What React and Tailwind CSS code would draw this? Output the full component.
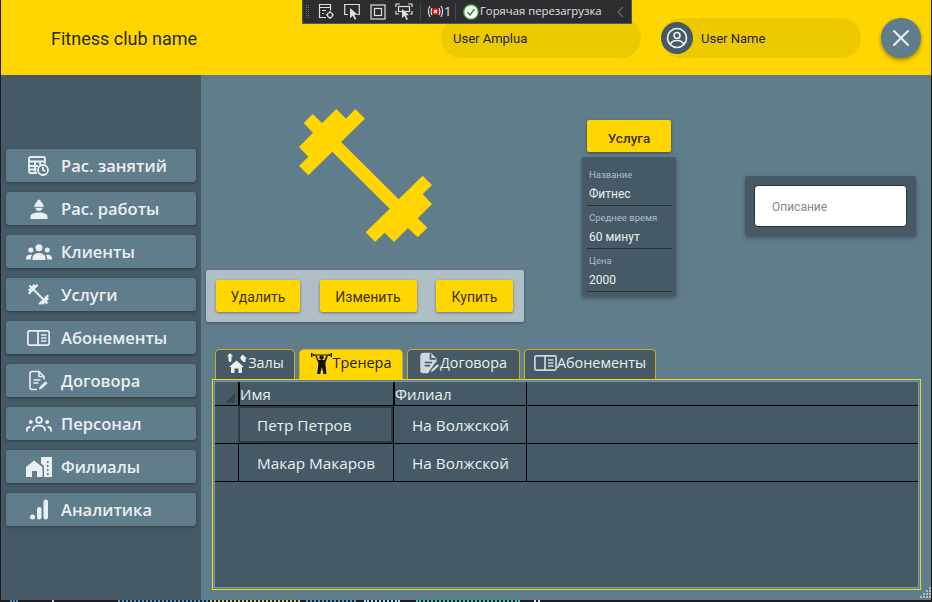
import { X } from "lucide-react";

const WHITE = "#ECEFF1";
const DUMBBELL =
  "M310 83L337 56L365 83L408 41L437 70L465 41L494 70L422 140L595 312L667 241L695 269L667 297L695 326L652 369L681 397L652 426L623 398L581 440L553 412L524 440L496 411L568 340L396 169L324 240L296 212L324 184L296 155L338 112Z";

const IconSchedule = () => (
  <svg width="21" height="20" viewBox="0 0 21 20" fill="none" stroke={WHITE} strokeWidth="1.800">
    <path d="M9 17H2.500a1.500 1.500 0 0 1-1.500-1.500V2.500A1.500 1.500 0 0 1 2.500 1h13A1.500 1.500 0 0 1 17 2.500V8" />
    <path d="M1 5.500h16M1 10h9M1 13.500h7.500M7 5.500V17M12 5.500V9" />
    <circle cx="15" cy="14" r="5" fill="#607D8B" />
    <path d="M15 11v3l2 1.300" />
  </svg>
);

const IconWorker = () => (
  <svg width="18" height="20" viewBox="0 0 18 20" fill={WHITE}>
    <path d="M4.800 6.500A4.300 4.300 0 0 1 7.500 2.600V.8h3v1.800a4.300 4.300 0 0 1 2.700 3.900h.8v1.200H4V6.500z" />
    <path d="M5.500 8.700h7c0 2-1.500 3.300-3.500 3.300s-3.500-1.300-3.500-3.300z" />
    <path d="M.5 20v-2.800c0-2 3.500-3.700 8.500-3.700s8.500 1.700 8.500 3.700V20z" />
  </svg>
);

const IconClients = () => (
  <svg width="26" height="16" viewBox="0 0 26 16" fill={WHITE}>
    <circle cx="13" cy="3.700" r="3.500" />
    <circle cx="4.800" cy="6" r="2.500" />
    <circle cx="21.200" cy="6" r="2.500" />
    <path d="M6.500 16v-2c0-3 3-5 6.500-5s6.500 2 6.500 5v2z" />
    <path d="M0 15.500v-1.300c0-2 1.700-3.500 4.500-3.500.6 0 1.100.1 1.500.2-.8 1-1.200 2.200-1.200 3.600v1zM26 15.500v-1.300c0-2-1.700-3.500-4.500-3.500-.6 0-1.100.1-1.500.2.800 1 1.200 2.200 1.200 3.600v1z" />
  </svg>
);

const IconDumbbell = () => (
  <svg width="21" height="21" viewBox="296 41 399 399" fill={WHITE}>
    <path d={DUMBBELL} />
  </svg>
);

const IconBook = ({ color = WHITE, w = 23, h = 16 }) => (
  <svg width={w} height={h} viewBox="0 0 23 16" fill="none" stroke={color} strokeWidth="1.700">
    <rect x="0.900" y="0.900" width="21.200" height="14.200" rx="1.500" />
    <path d="M11 1v14M14 5h5.500M14 8h5.500M14 11h5.500" />
  </svg>
);

const IconContract = ({ color = WHITE, w = 19, h = 21, filled }) => (
  <svg width={w} height={h} viewBox="0 0 19 21" fill={filled ? color : "none"} stroke={color} strokeWidth="1.600">
    <path d="M8 19.500H3a2 2 0 0 1-2-2v-14a2 2 0 0 1 2-2h7l5 5v3" />
    <path
      d="M10 1.500v5h5M4.500 10h7M4.500 13h5"
      stroke={filled ? "#455A64" : color}
      fill="none"
    />
    <path d="M10 19.500l.6-2.800 6-5.500 2 2-6 5.600z" fill={color} stroke={filled ? "#455A64" : "none"} strokeWidth="0.800" />
  </svg>
);

const IconStaff = () => (
  <svg width="26" height="16" viewBox="0 0 26 16" fill="none" stroke={WHITE} strokeWidth="1.900">
    <circle cx="13" cy="3.900" r="2.800" />
    <path d="M7 15v-1c0-2.800 2.700-4.400 6-4.400s6 1.600 6 4.400v1" />
    <circle cx="4.800" cy="6" r="2" fill={WHITE} stroke="none" />
    <circle cx="21.200" cy="6" r="2" fill={WHITE} stroke="none" />
    <path d="M.9 15.500v-1.500c0-1.800 1.300-3 3.500-3M25.100 15.500v-1.500c0-1.800-1.300-3-3.500-3" />
  </svg>
);

const IconBranches = () => (
  <svg width="26" height="20" viewBox="0 0 26 20" fill={WHITE}>
    <path fillRule="evenodd" d="M15 0h11v20H18V9l-3-2.500zM21 4v2h1.500V4zM21 8v2h1.500V8zM21 12v2h1.500v-2zM21 16v2h1.500v-2z" />
    <path fillRule="evenodd" d="M0 10l8-6.500L16.500 10v10H0zM6 14v6h5v-6z" />
  </svg>
);

const IconChart = () => (
  <svg width="18" height="21" viewBox="0 0 18 21" fill={WHITE}>
    <circle cx="2.500" cy="18" r="2.500" />
    <rect x="7" y="8" width="4.500" height="12.500" rx="2.200" />
    <rect x="13.500" y="0.500" width="4.500" height="20" rx="2.200" />
  </svg>
);

const IconHalls = () => (
  <svg className="mr-px" width="21" height="20" viewBox="0 0 21 20" fill={WHITE}>
    <path d="M10.500 7.500l7.500 6.500h-2v6h-3.500v-4.500h-4V20H5v-6H3z" />
    <path d="M16.500 1.500l4.500 4h-1.500V9h-2l-2.500-2.200V5.500H13.500zM4 0l3 3.500H5.500V8l-1.500 1.200L2.500 8V3.500H1z" />
  </svg>
);

const IconLifter = () => (
  <svg className="mr-px" width="21" height="22" viewBox="0 0 21 22" fill="#111">
    <path d="M0 1h1.500v4H0zM19.500 1H21v4h-1.500zM2 2h1.500v2H2zM17.500 2H19v2h-1.500z" />
    <path d="M3.500 2.500h14v1h-14z" />
    <circle cx="10.500" cy="5.500" r="2.200" />
    <path d="M4 3.500h1.500L7.500 8h6l2-4.500H17l-2.500 7v3l1 8.500h-3l-1.700-7-1.600 7h-3l1-8.500v-3z" />
  </svg>
);

const navItems = [
  { label: "Рас. занятий", icon: <IconSchedule /> },
  { label: "Рас. работы", icon: <IconWorker /> },
  { label: "Клиенты", icon: <IconClients /> },
  { label: "Услуги", icon: <IconDumbbell /> },
  { label: "Абонементы", icon: <IconBook /> },
  { label: "Договора", icon: <IconContract /> },
  { label: "Персонал", icon: <IconStaff /> },
  { label: "Филиалы", icon: <IconBranches /> },
  { label: "Аналитика", icon: <IconChart /> },
];

const NavButton = ({ label, icon }) => (
  <div className="flex h-[33px] w-[190px] items-center rounded-[3px] bg-[#607D8B] shadow-[0_1px_3px_rgba(0,0,0,0.35)]">
    <span className="ml-[10px] flex w-[45px] shrink-0 justify-center">{icon}</span>
    <span className="pt-[2px] font-['Open_Sans',sans-serif] text-[16.5px] font-semibold text-[#ECEFF1]">{label}</span>
  </div>
);

const YellowButton = ({ children, className }) => (
  <div className={`flex h-[32px] items-center justify-center rounded-[2px] bg-[#FFD600] font-['Roboto',sans-serif] text-[#3d3300] shadow-[0_1px_3px_rgba(0,0,0,0.4)] ${className}`}>
    {children}
  </div>
);

const Field = ({ label, value }) => (
  <div className="flex h-[43px] flex-col border-b border-[#263238] pl-[2px] pt-[6px]">
    <span className="font-['Roboto',sans-serif] text-[9.5px] leading-[12px] text-[#B0BEC5]">{label}</span>
    <span className="mt-[5px] font-['Roboto',sans-serif] text-[12px] leading-[16px] text-[#ECEFF1]">{value}</span>
  </div>
);

const Tab = ({ icon, label, active, className }) => (
  <div
    className={`flex h-[30px] items-center justify-center rounded-t-[5px] border border-b-0 border-[#c9b020] pb-[3px] font-['Open_Sans',sans-serif] text-[14.4px] ${
      active ? "bg-[#FFD600] text-[#222]" : "bg-[#455A64] text-[#ECEFF1]"
    } ${className}`}
  >
    {icon}
    <span>{label}</span>
  </div>
);

const DebugToolbar = () => (
  <div className="absolute left-[302px] top-0 flex h-[24px] w-[330px] items-center border border-t-0 border-[#555558] bg-[#2d2d30] font-['Open_Sans',sans-serif] text-[11.3px] text-[#e0e0e0]">
    <div className="ml-[3px] grid grid-cols-2 gap-[1px]">
      {Array.from({ length: 14 }).map((_, i) => (
        <span key={i} className="h-px w-px bg-[#6a6a6a]" />
      ))}
    </div>
    <svg className="ml-[9px]" width="17" height="17" viewBox="0 0 17 17" fill="none" stroke="#e0e0e0" strokeWidth="1.200">
      <path d="M8 14.500H1.500V1.500h11v6M1.500 4.500h11M4 7.500h4M4 10.500h2" />
      <circle cx="12" cy="12" r="2.500" />
      <path d="M12 8v1.500M12 14.500V16M8 12h1.500M14.500 12H16" />
    </svg>
    <svg className="ml-[9px]" width="16" height="17" viewBox="0 0 16 17" fill="none" stroke="#e0e0e0" strokeWidth="1.200">
      <path d="M4 11.500H.7V1.500h14.600v10h-2" />
      <path d="M6 5l7.500 6.500-3.200.5 2 4-1.500.7-2-4L6 15z" fill="#e0e0e0" stroke="none" />
    </svg>
    <svg className="ml-[10px]" width="16" height="16" viewBox="0 0 16 16" fill="none" stroke="#e0e0e0" strokeWidth="1.200">
      <rect x="1" y="1" width="14" height="14" />
      <rect x="4.500" y="4.500" width="7" height="7" />
    </svg>
    <svg className="ml-[9px]" width="18" height="17" viewBox="0 0 18 17" fill="none" stroke="#e0e0e0" strokeWidth="1.200">
      <path d="M1 4V1h4M13 1h4v3M1 8v3h3M17 8v3h-2" />
      <rect x="3.500" y="3.500" width="11" height="5" />
      <path d="M7 6l7 6-3 .5 2 4-1.500.5-2-4L7 15z" fill="#e0e0e0" stroke="none" />
    </svg>
    <div className="ml-[7px] h-[17px] w-px bg-[#4a4a4d]" />
    <svg className="ml-[6px]" width="17" height="17" viewBox="0 0 17 17" fill="none" stroke="#e0e0e0" strokeWidth="1.200">
      <path d="M3 3C1 6 1 10 3 14M14 3c2 3 2 7 0 11M5 5c-1 2-1 5 0 7M12 5c1 2 1 5 0 7" />
      <circle cx="8.500" cy="8.500" r="3.500" fill="#e51400" stroke="none" />
      <path d="M7 7l3 3M10 7l-3 3" stroke="#fff" />
    </svg>
    <span className="w-[6px] text-[13px]">1</span>
    <div className="ml-[5px] h-[17px] w-px bg-[#4a4a4d]" />
    <svg className="ml-[7px]" width="16" height="16" viewBox="0 0 16 16" fill="none">
      <circle cx="8" cy="8" r="7.300" fill="#fff" stroke="#3f9b3f" strokeWidth="1.400" />
      <path d="M4.500 8l2.500 3 4.500-6" stroke="#2e8b2e" strokeWidth="1.500" />
    </svg>
    <span className="ml-[1px] whitespace-nowrap">Горячая перезагрузка</span>
    <svg className="ml-auto mr-[7px]" width="7" height="12" viewBox="0 0 7 12" fill="none" stroke="#6a6a6a" strokeWidth="1.200">
      <path d="M6 1L1 6l5 5" />
    </svg>
  </div>
);

const rows = ["Петр Петров", "Макар Макаров"];

// cut off console text under the window
const strip = [
  { w: 8, ml: 10, c: "#4a90c8" },
  { w: 2, ml: 34, c: "#c8c8c8" },
  { w: 90, ml: 64, c: "#5c9bd0" },
  { w: 90, ml: 2, c: "#d8c48a" },
  { w: 50, ml: 6, c: "#5c9bd0" },
  { w: 36, ml: 8, c: "#b8d8f0" },
  { w: 104, ml: 16, c: "#4ec9a8" },
  { w: 6, ml: 14, c: "#e0e0e0" },
];

export default function App() {
  return (
    <div className="relative h-[602px] w-[932px] overflow-hidden bg-[#1e1e1e]">
      <div className="mx-px flex h-[600px] flex-col bg-[#607D8B]">
        {/* Header */}
        <header className="flex h-[75px] shrink-0 items-center bg-[#FFD600] font-['Roboto',sans-serif] text-[#222]">
          <span className="ml-[50px] w-[390px] pt-[1px] text-[18px] text-[#2a2a1a]">Fitness club name</span>
          <div className="flex h-[40px] w-[200px] items-center rounded-[20px] bg-[#EDCA00] pl-[12px] pt-[2px] text-[13px]">User Amplua</div>
          <div className="ml-[20px] flex h-[40px] w-[200px] items-center rounded-[20px] bg-[#EDCA00] text-[13px]">
            <span className="flex h-[32px] w-[32px] items-center justify-center rounded-full bg-[#455A64]">
              <svg width="22" height="22" viewBox="0 0 22 22" fill="none" stroke="#ECEFF1" strokeWidth="1.700">
                <circle cx="11" cy="11" r="9.500" />
                <circle cx="11" cy="8.500" r="3" />
                <path d="M4.500 17c1-2.500 3.500-3.500 6.500-3.500s5.500 1 6.500 3.500" />
              </svg>
            </span>
            <span className="ml-[8px] pt-[2px]">User Name</span>
          </div>
          <div className="ml-[20px] flex h-[40px] w-[40px] items-center justify-center rounded-full bg-[#607D8B] shadow-[0_2px_4px_rgba(0,0,0,0.4)]">
            <X size={28} color="#ECEFF1" strokeWidth={1.8} />
          </div>
        </header>

        <div className="flex min-h-0 flex-1">
          {/* Sidebar */}
          <aside className="flex w-[200px] shrink-0 flex-col gap-[10px] bg-[#455A64] pl-[5px] pt-[74px]">
            {navItems.map((item) => (
              <NavButton key={item.label} {...item} />
            ))}
          </aside>

          {/* Content */}
          <main className="flex min-w-0 flex-1 flex-col">
            <div className="flex h-[274px] shrink-0">
              <div className="ml-[5px] flex w-[318px] flex-col items-center pt-[34px]">
                <svg width="133" height="133" viewBox="296 41 399 399" fill="#FFD600">
                  <path d={DUMBBELL} />
                </svg>
                <div className="mt-[28px] flex h-[52px] w-[318px] items-center justify-between rounded-[2px] bg-[#B0BEC5] pl-[10px] pr-[11px] shadow-[0_1px_3px_rgba(0,0,0,0.35)]">
                  <YellowButton className="w-[84px] pt-[2px] text-[14px]">Удалить</YellowButton>
                  <YellowButton className="w-[97px] pt-[2px] text-[14px]">Изменить</YellowButton>
                  <YellowButton className="w-[77px] pt-[2px] text-[14px]">Купить</YellowButton>
                </div>
              </div>

              <div className="ml-[58px] flex w-[94px] flex-col pt-[45px]">
                <YellowButton className="mx-[5px] w-[84px] pt-[4px] text-[13.5px] font-medium">Услуга</YellowButton>
                <div className="mt-[5px] h-[139px] rounded-[2px] bg-[#455A64] pl-[5px] pr-[4px] pt-[6px] shadow-[0_2px_4px_rgba(0,0,0,0.35)]">
                  <Field label="Название" value="Фитнес" />
                  <Field label="Среднее время" value="60 минут" />
                  <Field label="Цена" value="2000" />
                </div>
              </div>

              <div className="ml-[69px] mt-[101px] h-[60px] w-[171px] rounded-[2px] bg-[#455A64] p-[9px] shadow-[0_2px_4px_rgba(0,0,0,0.3)]">
                <div className="flex h-[42px] w-[153px] items-center rounded-[4px] border border-[#263238] bg-white pl-[17px] pt-[2px] font-['Roboto',sans-serif] text-[12px] text-[#888]">
                  Описание
                </div>
              </div>
            </div>

            {/* Tabs */}
            <div className="ml-[14px] flex h-[30px] shrink-0 gap-[4px]">
              <Tab className="w-[80px]" icon={<IconHalls />} label="Залы" />
              <Tab className="w-[104px]" icon={<IconLifter />} label="Тренера" active />
              <Tab className="w-[113px]" icon={<IconContract color="#CFD8DC" w={20} h={22} filled />} label="Договора" />
              <Tab className="w-[132px]" icon={<IconBook color="#CFD8DC" w={23} h={16} />} label="Абонементы" />
            </div>

            {/* Table */}
            <div className="ml-[11px] h-[211px] w-[709px] shrink-0 border border-[#FFD600] p-px">
              <div className="flex h-full flex-col border border-[#6b9ac4] bg-[#455A64] font-['Open_Sans',sans-serif] text-[#ECEFF1]">
                <div className="grid h-[24px] grid-cols-[23px_155px_133px_1fr] border-b border-black text-[15px] font-medium leading-[24px]">
                  <div className="flex items-end justify-end pb-[3px] pr-[3px]">
                    <span className="h-0 w-0 border-b-[10px] border-l-[10px] border-b-[#37474F] border-l-transparent" />
                  </div>
                  <div className="border-l-2 border-black">Имя</div>
                  <div className="border-l-2 border-black">Филиал</div>
                  <div className="border-l border-black" />
                </div>
                {rows.map((name, i) => (
                  <div key={name} className="grid h-[38px] grid-cols-[23px_155px_133px_1fr] border-b border-black text-[15.3px]">
                    <div />
                    <div className={`flex items-center pt-[1px] ${i === 0 ? "border-2 border-[#2c3a41] pl-[17px]" : "border-l border-black pl-[18px]"}`}>{name}</div>
                    <div className="flex items-center border-l border-black pl-[18px] pt-[1px]">На Волжской</div>
                    <div className="border-l border-black" />
                  </div>
                ))}
              </div>
            </div>
          </main>
        </div>
      </div>

      <div className="flex h-[2px]">
        {strip.map((s, i) => (
          <span key={i} className="h-[2px] border-t-2 border-dotted" style={{ width: s.w, marginLeft: s.ml, borderColor: s.c }} />
        ))}
      </div>

      <DebugToolbar />

      {/* Resize grip */}
      <svg className="absolute bottom-[4px] right-[1px]" width="12" height="11" viewBox="0 0 12 11" fill="#B0BEC5">
        <path d="M10 0h2v2h-2zM10 3h2v2h-2zM7 3h2v2H7zM10 6h2v2h-2zM7 6h2v2H7zM4 6h2v2H4zM10 9h2v2h-2zM7 9h2v2H7zM4 9h2v2H4zM1 9h2v2H1z" />
      </svg>
    </div>
  );
}
